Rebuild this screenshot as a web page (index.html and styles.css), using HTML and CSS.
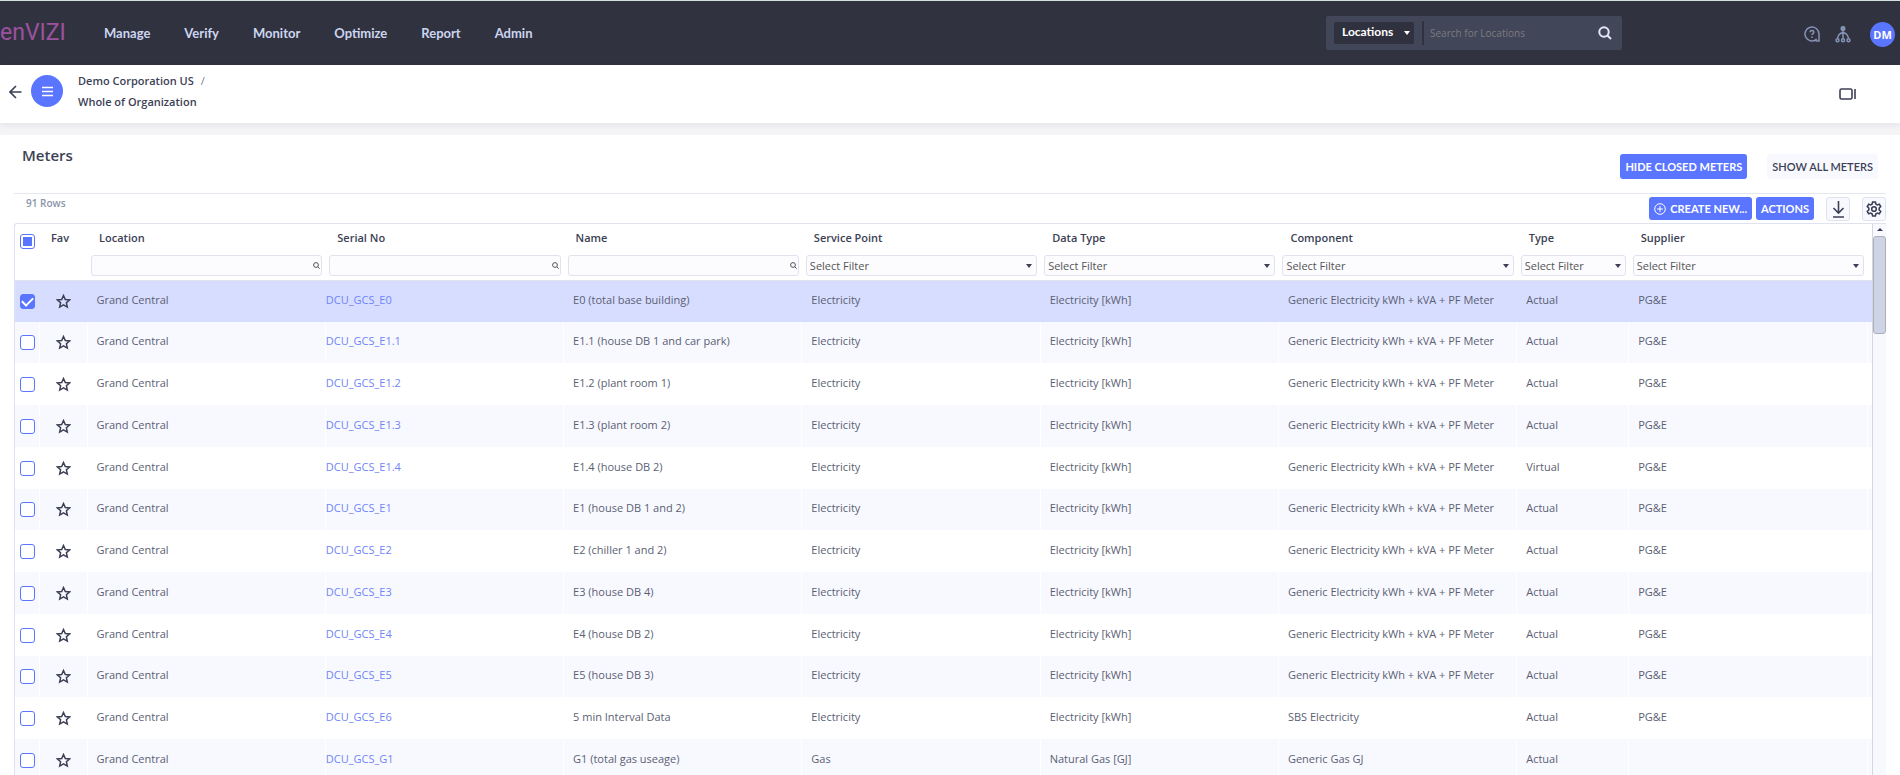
FILE: index.html
```html
<!DOCTYPE html>
<html lang="en">
<head>
  <meta charset="UTF-8" />
  <title>Meters</title>
  <link rel="stylesheet" href="styles.css">
</head>
<body>
  <header class="topbar">
    <a class="logo" href="#">enVIZI</a>
    <nav class="main-nav">
      <a href="#">Manage</a>
      <a href="#">Verify</a>
      <a href="#">Monitor</a>
      <a href="#">Optimize</a>
      <a href="#">Report</a>
      <a href="#">Admin</a>
    </nav>
    <form class="search">
      <div class="caret-box scope">
        <select aria-label="Search scope"><option>Locations</option></select>
      </div>
      <input type="text" class="search-input" aria-label="Search" placeholder="Search for Locations" />
      <button type="button" class="search-btn" aria-label="Search">
        <svg width="14" height="14" viewBox="0 0 14 14"><circle cx="6" cy="6" r="4.7"/><path d="M9.5 9.5L13 13"/></svg>
      </button>
    </form>
    <div class="top-icons">
      <button type="button" class="icon-btn" aria-label="Help">
        <svg width="16" height="16" viewBox="0 0 16 16"><path d="M12.8 13.1A7 7 0 1 1 15 8v7h-2.2c-1 0-1.6-.9-1-1.7"/><path d="M6.2 6.3c0-2.3 3.6-2.3 3.6 0 0 1.2-1.8 1.3-1.8 2.7M8 10.6v1.3"/></svg>
      </button>
      <button type="button" class="icon-btn" aria-label="Hierarchy">
        <svg width="16" height="17" viewBox="0 0 16 17"><circle class="dot" cx="8" cy="2.500" r="1.800"/><path d="M8 4v8.500M8 6.500C5.500 7 3 9 2.500 12.500M8 6.500c2.500.5 5 2.500 5.500 6"/><circle cx="2.500" cy="14.200" r="1.500"/><circle cx="8" cy="14.200" r="1.500"/><circle cx="13.500" cy="14.200" r="1.500"/></svg>
      </button>
      <button type="button" class="avatar">DM</button>
    </div>
  </header>

  <section class="subbar">
    <button type="button" class="back-btn" aria-label="Back">
      <svg width="13" height="14" viewBox="0 0 13 14"><path d="M12.500 7H1M7 1L1 7l6 6"/></svg>
    </button>
    <button type="button" class="menu-btn" aria-label="Menu">
      <svg width="11" height="11" viewBox="0 0 11 11"><path d="M0 1.500h11M0 5.500h11M0 9.500h11"/></svg>
    </button>
    <div class="crumbs">
      <div><a href="#">Demo Corporation US</a><span class="slash">/</span></div>
      <div><a href="#">Whole of Organization</a></div>
    </div>
    <button type="button" class="panel-btn" aria-label="Toggle panel">
      <svg width="18" height="12" viewBox="0 0 18 12"><rect x="1" y="1" width="12" height="10" rx="1.500"/><path d="M16 1v10"/></svg>
    </button>
  </section>

  <main class="card">
    <div class="card-head">
      <h1>Meters</h1>
      <div class="card-actions">
        <button type="button" class="btn primary">HIDE CLOSED METERS</button>
        <button type="button" class="btn light">SHOW ALL METERS</button>
      </div>
    </div>

    <div class="toolbar">
      <span class="row-count">91 Rows</span>
      <div class="tools">
        <button type="button" class="btn primary create">
          <svg width="12" height="12" viewBox="0 0 12 12"><circle cx="6" cy="6" r="5.300"/><path d="M6 3v6M3 6h6"/></svg>
          CREATE NEW...
        </button>
        <button type="button" class="btn primary">ACTIONS</button>
        <button type="button" class="square-btn" aria-label="Download">
          <svg width="13" height="17" viewBox="0 0 13 17"><path d="M6.500 0v12M1.500 7l5 5 5-5M1 16h11"/></svg>
        </button>
        <button type="button" class="square-btn" aria-label="Settings">
          <svg width="16" height="16" viewBox="0 0 16 16"><path d="M6.600 1h2.800l.4 2 1.500.9 2-.7 1.400 2.400-1.500 1.400v2l1.500 1.400-1.400 2.400-2-.7-1.500.9-.4 2H6.600l-.4-2-1.500-.9-2 .7-1.400-2.400L2.800 9V7L1.300 5.600l1.400-2.400 2 .7L6.200 3z"/><circle cx="8" cy="8" r="2.300"/></svg>
        </button>
      </div>
    </div>

    <div class="grid">
      <table>
        <colgroup>
          <col class="c-check"><col class="c-fav"><col><col><col><col><col><col><col class="c-type"><col><col class="c-more">
        </colgroup>
        <thead>
          <tr id="headRow"></tr>
        </thead>
        <tbody id="metersBody"></tbody>
      </table>
      <div class="scroll">
        <span class="scroll-up"></span>
        <span class="scroll-thumb"></span>
      </div>
    </div>
  </main>

  <script>
    const columns = [
      { name: "Location", filter: "text" },
      { name: "Serial No", filter: "text" },
      { name: "Name", filter: "text" },
      { name: "Service Point", filter: "select" },
      { name: "Data Type", filter: "select" },
      { name: "Component", filter: "select" },
      { name: "Type", filter: "select" },
      { name: "Supplier", filter: "select" }
    ];

    const generic = "Generic Electricity kWh + kVA + PF Meter";

    // serial, name, service point, data type, component, type, supplier
    const meters = [
      ["DCU_GCS_E0", "E0 (total base building)", "Electricity", "Electricity [kWh]", generic, "Actual", "PG&amp;E"],
      ["DCU_GCS_E1.1", "E1.1 (house DB 1 and car park)", "Electricity", "Electricity [kWh]", generic, "Actual", "PG&amp;E"],
      ["DCU_GCS_E1.2", "E1.2 (plant room 1)", "Electricity", "Electricity [kWh]", generic, "Actual", "PG&amp;E"],
      ["DCU_GCS_E1.3", "E1.3 (plant room 2)", "Electricity", "Electricity [kWh]", generic, "Actual", "PG&amp;E"],
      ["DCU_GCS_E1.4", "E1.4 (house DB 2)", "Electricity", "Electricity [kWh]", generic, "Virtual", "PG&amp;E"],
      ["DCU_GCS_E1", "E1 (house DB 1 and 2)", "Electricity", "Electricity [kWh]", generic, "Actual", "PG&amp;E"],
      ["DCU_GCS_E2", "E2 (chiller 1 and 2)", "Electricity", "Electricity [kWh]", generic, "Actual", "PG&amp;E"],
      ["DCU_GCS_E3", "E3 (house DB 4)", "Electricity", "Electricity [kWh]", generic, "Actual", "PG&amp;E"],
      ["DCU_GCS_E4", "E4 (house DB 2)", "Electricity", "Electricity [kWh]", generic, "Actual", "PG&amp;E"],
      ["DCU_GCS_E5", "E5 (house DB 3)", "Electricity", "Electricity [kWh]", generic, "Actual", "PG&amp;E"],
      ["DCU_GCS_E6", "5 min Interval Data", "Electricity", "Electricity [kWh]", "SBS Electricity", "Actual", "PG&amp;E"],
      ["DCU_GCS_G1", "G1 (total gas useage)", "Gas", "Natural Gas [GJ]", "Generic Gas GJ", "Actual", ""]
    ];

    const star = `<svg width="15" height="15" viewBox="0 0 15 15"><path d="M7.500 1.500l1.800 4 4.300.4-3.200 2.900.9 4.300-3.800-2.200-3.800 2.200.9-4.300L1.400 5.900l4.300-.4z"/></svg>`;
    const lens = `<svg width="7" height="7" viewBox="0 0 7 7"><circle cx="3" cy="3" r="2.400"/><path d="M4.800 4.800L6.700 6.700"/></svg>`;

    function headCell(col) {
      const filter = col.filter === "text"
        ? `<div class="filter"><input type="text" aria-label="Filter ${col.name}" />${lens}</div>`
        : `<div class="filter caret-box"><select aria-label="Filter ${col.name}"><option>Select Filter</option></select></div>`;
      return `<th><span class="th-label">${col.name}</span>${filter}</th>`;
    }

    document.getElementById("headRow").innerHTML =
      `<th class="check"><input type="checkbox" id="checkAll" aria-label="Select all" /></th>
       <th><span class="th-label">Fav</span></th>` +
      columns.map(headCell).join("") +
      `<th></th>`;
    document.getElementById("checkAll").indeterminate = true;

    document.getElementById("metersBody").innerHTML = meters.map((m, i) => `
      <tr class="${i === 0 ? "selected" : ""}">
        <td class="check"><input type="checkbox" aria-label="Select ${m[0]}" ${i === 0 ? "checked" : ""} /></td>
        <td class="fav"><button type="button" aria-label="Favourite ${m[0]}">${star}</button></td>
        <td>Grand Central</td>
        <td class="serial"><a href="#">${m[0]}</a></td>
        ${m.slice(1).map(v => `<td>${v}</td>`).join("")}
        <td></td>
      </tr>`).join("");
  </script>
</body>
</html>
```
FILE: styles.css
```css
* {
  margin: 0;
  padding: 0;
  box-sizing: border-box;
}

body {
  font-family: 'Open Sans', 'Noto Sans', sans-serif;
  font-size: 11px;
  color: #3c3f55;
  background: #f4f4f7;
  height: 100vh;
  display: flex;
  flex-direction: column;
  overflow: hidden;
}

a {
  color: inherit;
  text-decoration: none;
}

button, input, select {
  font: inherit;
  color: inherit;
  border: none;
  background: none;
}

button {
  cursor: pointer;
}

svg {
  display: block;
  fill: none;
  stroke: currentColor;
}

/* top bar */
.topbar {
  flex: none;
  display: flex;
  align-items: center;
  height: 65px;
  background: #30323f;
  border-top: 1px solid #d3dfe0;
}

.logo {
  width: 104px;
  padding-bottom: 2px;
  font-family: Roboto, sans-serif;
  font-size: 23px;
  color: #9c529f;
}

.main-nav {
  display: flex;
  gap: 34px;
  font-family: Lato, sans-serif;
  font-size: 13px;
  font-weight: bold;
  color: #ccd5f0;
}

.search {
  display: flex;
  align-items: center;
  width: 296px;
  height: 34px;
  margin-left: auto;
  padding: 0 8px;
  background: #424659;
  border-radius: 2px;
}

.caret-box {
  position: relative;
}

.caret-box::after {
  content: "";
  position: absolute;
  right: 4px;
  top: 50%;
  margin-top: -2px;
  border: 3px solid transparent;
  border-top: 4px solid #3c3f55;
  border-bottom: none;
  pointer-events: none;
}

select {
  appearance: none;
  width: 100%;
}

.scope {
  width: 80px;
  margin-right: 8px;
}

.scope select {
  height: 22px;
  padding: 0 8px 4px;
  background: #2f313e;
  border-radius: 2px;
  color: white;
  font-family: Lato, sans-serif;
  font-size: 12px;
  font-weight: bold;
}

.scope::after {
  border-top-color: white;
}

.search-input {
  flex: 1;
  min-width: 0;
  height: 24px;
  padding-left: 6px;
  border-left: 2px solid #30323f;
  font-size: 10px;
}

.search-input::placeholder {
  color: #7c7c80;
}

.search-btn {
  padding: 0 2px;
  color: #e4e8f5;
  stroke-width: 2;
}

.top-icons {
  display: flex;
  align-items: center;
  gap: 15px;
  width: 278px;
  padding: 2px 5px 0 0;
  justify-content: flex-end;
}

.icon-btn {
  color: #8593b5;
  stroke-width: 1.5;
}

.icon-btn .dot {
  fill: currentColor;
}

.avatar {
  width: 25px;
  height: 25px;
  margin-left: 4px;
  border-radius: 50%;
  background: #5a75ff;
  color: white;
  font-weight: bold;
}

/* breadcrumb bar */
.subbar {
  flex: none;
  display: flex;
  align-items: center;
  height: 58px;
  padding: 0 43px 4px 9px;
  background: white;
  box-shadow: 0 2px 6px rgba(40, 42, 60, 0.08);
}

.back-btn {
  stroke-width: 1.6;
}

.menu-btn {
  display: grid;
  place-items: center;
  width: 32px;
  height: 32px;
  margin: 0 15px 2px 9px;
  border-radius: 50%;
  background: #5a75ff;
  color: white;
  stroke-width: 1.6;
}

.crumbs {
  font-weight: 600;
  line-height: 21px;
  padding-bottom: 2px;
}

.slash {
  margin-left: 7px;
  font-weight: normal;
  color: #777b8c;
}

.panel-btn {
  margin-left: auto;
  padding-top: 4px;
  stroke-width: 1.6;
}

/* meters card */
.card {
  flex: 1;
  min-height: 0;
  display: flex;
  flex-direction: column;
  margin-top: 12px;
  padding: 0 14px;
  background: white;
}

.card-head {
  flex: none;
  display: flex;
  justify-content: space-between;
  height: 58px;
  padding: 10px 8px 0;
}

h1 {
  font-size: 15px;
  line-height: 20px;
  font-weight: 600;
}

.card-actions {
  display: flex;
  gap: 20px;
  padding-top: 9px;
}

.btn {
  height: 23px;
  padding: 0 5px;
  border-radius: 3px;
  font-family: Lato, sans-serif;
  white-space: nowrap;
}

.card-actions .btn {
  height: 25px;
}

.primary {
  background: #5a75ff;
  color: white;
  font-weight: bold;
}

.light {
  background: #f8f9ff;
  font-weight: 600;
}

.toolbar {
  flex: none;
  display: flex;
  justify-content: space-between;
  height: 30px;
  border-top: 1px solid #e4e6f1;
}

.row-count {
  padding: 2px 12px;
  font-size: 10px;
  font-weight: 600;
  color: #8a95ab;
}

.tools {
  display: flex;
  padding-top: 3px;
}

.create {
  display: flex;
  align-items: center;
  gap: 4px;
  margin-right: 4px;
}

.square-btn {
  display: grid;
  place-items: center;
  width: 24px;
  height: 24px;
  margin-left: 12px;
  border: 1px solid #e0e3ef;
  border-radius: 3px;
  background: #f8f9ff;
  stroke-width: 1.6;
}

.grid {
  flex: 1;
  min-height: 0;
  display: flex;
  align-items: stretch;
  overflow: hidden;
  border-top: 1px solid #e0e3ef;
  border-left: 1px solid #e0e3ef;
  border-top-left-radius: 3px;
}

table {
  flex: 1;
  width: 100%;
  height: 0;
  table-layout: fixed;
  border-collapse: collapse;
}

.c-check {
  width: 24px;
}

.c-fav {
  width: 48px;
}

.c-type {
  width: 112px;
}

.c-more {
  width: 5px;
}

th {
  height: 56px;
  padding: 6px 3px 0 4px;
  text-align: left;
  vertical-align: top;
  overflow: hidden;
  border-bottom: 1px solid #dfe3ee;
  font-weight: 600;
}

th.check {
  padding-top: 10px;
}

.th-label {
  display: block;
  height: 25px;
  padding-left: 8px;
  line-height: 16px;
}

.filter {
  display: flex;
  align-items: center;
  height: 21px;
  padding-right: 1px;
  border: 1px solid #e0e3ef;
  border-radius: 3px;
  background: #fcfcff;
  font-weight: normal;
  color: #555;
}

.filter input {
  flex: 1;
  min-width: 0;
  height: 19px;
  padding-left: 4px;
}

.filter select {
  height: 19px;
  padding-left: 3px;
}

td {
  height: 42px;
  padding: 0 9px 4px;
  color: #5b5f73;
  white-space: nowrap;
  overflow: hidden;
  border-left: 1px solid white;
}

tr:nth-child(4n+2) td {
  height: 41px;
}

tr:nth-child(even) td {
  background: #f8f9ff;
}

tr.selected td {
  background: #d7ddff;
  border-left-color: #d7ddff;
}

td:first-child {
  border-left: none;
}

td.check, th.check {
  padding-left: 5px;
  padding-right: 0;
}

td.check, td.fav {
  padding-bottom: 0;
}

td.fav button {
  display: block;
  margin-left: 7px;
  color: #3c3f55;
  stroke-width: 1.5;
}

td.serial {
  padding-left: 0;
  color: #6f85f7;
}

input[type="checkbox"] {
  appearance: none;
  display: grid;
  place-items: center;
  width: 15px;
  height: 15px;
  border: 1px solid #5a75ff;
  border-radius: 3px;
  background: white;
}

input[type="checkbox"]:indeterminate::after {
  content: "";
  width: 9px;
  height: 9px;
  background: #5a75ff;
}

input[type="checkbox"]:checked {
  background: #5a75ff;
}

input[type="checkbox"]:checked::after {
  content: "";
  width: 9px;
  height: 5px;
  margin-bottom: 2px;
  border-left: 2px solid white;
  border-bottom: 2px solid white;
  transform: rotate(-45deg);
}

/* scroll track beside the table */
.scroll {
  flex: none;
  display: flex;
  flex-direction: column;
  align-items: center;
  width: 14px;
  background: #f8f9ff;
  border-left: 1px solid #d5d7df;
}

.scroll-up {
  margin: 4px 0 5px;
  border: 3px solid transparent;
  border-bottom: 3px solid #3c3f55;
  border-top: none;
}

.scroll-thumb {
  width: 13px;
  height: 98px;
  border: 1px solid #adb0ba;
  border-radius: 3px;
  background: #cdd4e6;
}
```
